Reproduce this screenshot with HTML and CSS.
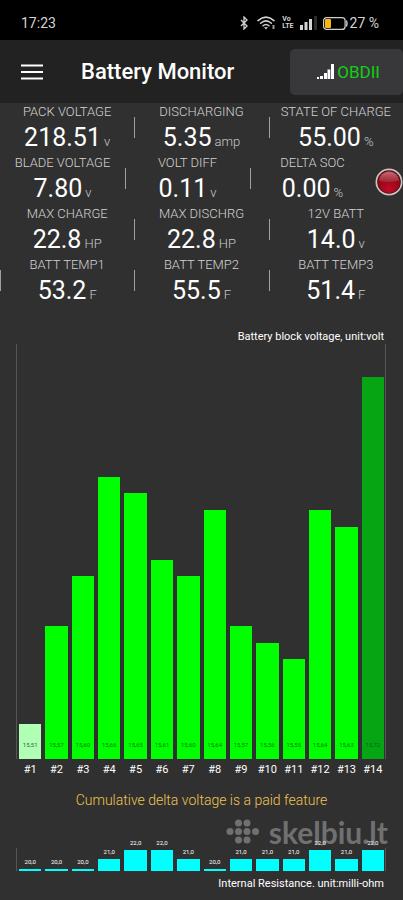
FILE: index.html
```html
<!DOCTYPE html>
<html lang="en">
<head>
<meta charset="utf-8">
<meta name="viewport" content="width=device-width, initial-scale=1">
<title>Battery Monitor</title>
<link rel="stylesheet" href="styles.css">
</head>
<body>
<div class="status">
  <span class="clock">17:23</span>
  <div class="tray">
    <svg class="bluetooth" width="8" height="14" viewBox="0 0 8 14"><path d="M1 4l6 6-3 3V1l3 3-6 6" fill="none" stroke="#d4d4d4" stroke-width="1.3"/></svg>
    <svg class="wifi" width="19" height="14" viewBox="0 0 19 14"><g fill="none" stroke="#d4d4d4" stroke-width="1.5" stroke-linecap="round"><path d="M1 4.6Q9 -2.4 17 4.6"/><path d="M3.6 7.2Q9 2.6 14.4 7.2"/><path d="M6 9.8Q9 7.2 12 9.8"/></g><path d="M7 11.2h4L9 13.4z" fill="#d4d4d4"/><path d="M16.5 9v4" stroke="#999" stroke-width="2"/></svg>
    <span class="volte"><span>Vo</span><span>LTE</span></span>
    <svg class="cell" width="17" height="14" viewBox="0 0 17 14"><g fill="#d4d4d4"><rect y="9" width="3" height="5"/><rect x="4.500" y="6" width="3" height="8"/><rect x="9" y="3" width="3" height="11"/></g><rect x="14" width="3" height="14" fill="#2b2b2b"/></svg>
    <svg class="battery" width="25" height="13" viewBox="0 0 25 13"><rect x=".6" y=".6" width="21.500" height="11.800" rx="3" fill="none" stroke="#cfcfcf" stroke-width="1.200"/><rect x="2" y="2" width="6" height="9" rx="1" fill="#fbb315"/><path d="M23.300 3.500q1.400 3 0 6" fill="none" stroke="#cfcfcf" stroke-width="1.400"/></svg>
    <span class="percent">27 %</span>
  </div>
</div>

<header class="bar">
  <button class="menu" type="button" aria-label="Menu"><svg width="22" height="16" viewBox="0 0 22 16"><path d="M0 1.500h22M0 8h22M0 14.500h22" stroke="#fff" stroke-width="2.200"/></svg></button>
  <h1>Battery Monitor</h1>
  <button class="obd" type="button"><svg width="17" height="16" viewBox="0 0 17 16" fill="#fff"><rect y="13" width="2" height="2"/><rect x="3" y="12" width="3" height="3"/><rect x="7" y="9" width="3" height="6"/><rect x="10.500" y="5.500" width="2.800" height="9.500"/><rect x="14" y="0" width="3" height="15"/></svg><span>OBDII</span></button>
</header>

<main>
  <section class="stats">
    <div class="row">
      <div class="stat"><h2>PACK VOLTAGE</h2><p>218.51<small>v</small></p></div>
      <div class="stat"><h2>DISCHARGING</h2><p>5.35<small>amp</small></p></div>
      <div class="stat"><h2>STATE OF CHARGE</h2><p>55.00<small>%</small></p></div>
    </div>
    <div class="row">
      <div class="stat"><h2>BLADE VOLTAGE</h2><p>7.80<small>v</small></p></div>
      <div class="stat"><h2>VOLT DIFF</h2><p>0.11<small>v</small></p></div>
      <div class="stat"><h2>DELTA SOC</h2><p>0.00<small>%</small></p></div>
      <svg class="led" width="28" height="28" viewBox="0 0 28 28"><defs><radialGradient id="red" cx=".5" cy=".85" r=".8"><stop offset="0" stop-color="#c00a26"/><stop offset="1" stop-color="#800614"/></radialGradient><linearGradient id="shine" x2="0" y2="1"><stop offset="0" stop-color="#d58a92"/><stop offset="1" stop-color="#a52a38"/></linearGradient></defs><circle cx="14" cy="14" r="13.500" fill="#c9c5c2"/><circle cx="14" cy="14" r="11.800" fill="#4c0a10"/><circle cx="14" cy="14" r="11" fill="url(#red)"/><path d="M4 12.500a10 9 0 0 1 20 0q-10 3.500-20 0z" fill="url(#shine)" opacity=".75"/></svg>
    </div>
    <div class="row">
      <div class="stat"><h2>MAX CHARGE</h2><p>22.8<small>HP</small></p></div>
      <div class="stat"><h2>MAX DISCHRG</h2><p>22.8<small>HP</small></p></div>
      <div class="stat"><h2>12V BATT</h2><p>14.0<small>v</small></p></div>
    </div>
    <div class="row lead">
      <div class="stat"><h2>BATT TEMP1</h2><p>53.2<small>F</small></p></div>
      <div class="stat"><h2>BATT TEMP2</h2><p>55.5<small>F</small></p></div>
      <div class="stat"><h2>BATT TEMP3</h2><p>51.4<small>F</small></p></div>
    </div>
  </section>

  <section class="voltage">
    <h2 class="caption">Battery block voltage, unit:volt</h2>
    <div class="plot volts">
      <div class="block low" style="height:8.5%">15,51</div>
      <div class="block" style="height:32%">15,57</div>
      <div class="block" style="height:44%">15,60</div>
      <div class="block" style="height:68%">15,66</div>
      <div class="block" style="height:64%">15,65</div>
      <div class="block" style="height:48%">15,61</div>
      <div class="block" style="height:44%">15,60</div>
      <div class="block" style="height:60%">15,64</div>
      <div class="block" style="height:32%">15,57</div>
      <div class="block" style="height:28%">15,56</div>
      <div class="block" style="height:24%">15,55</div>
      <div class="block" style="height:60%">15,64</div>
      <div class="block" style="height:56%">15,63</div>
      <div class="block high" style="height:92%">15,72</div>
    </div>
    <div class="names"><span>#1</span><span>#2</span><span>#3</span><span>#4</span><span>#5</span><span>#6</span><span>#7</span><span>#8</span><span>#9</span><span>#10</span><span>#11</span><span>#12</span><span>#13</span><span>#14</span></div>
  </section>

  <p class="notice">Cumulative delta voltage is a paid feature</p>

  <section class="resistance">
    <div class="watermark">
      <svg width="34" height="26" viewBox="0 0 34 26" fill="currentColor"><circle cx="12.500" cy="4" r="3.500"/><circle cx="21" cy="4" r="3.500"/><circle cx="4" cy="12.500" r="3.500"/><circle cx="12.500" cy="12.500" r="3.500"/><circle cx="21" cy="12.500" r="3.500"/><circle cx="29.500" cy="12.500" r="3.500"/><circle cx="12.500" cy="21" r="3.500"/><circle cx="21" cy="21" r="3.500"/></svg>
      <span>skelbiu.lt</span>
    </div>
    <div class="plot ohms">
      <div class="ohm"><span>20,0</span><i style="height:10%"></i></div>
      <div class="ohm"><span>20,0</span><i style="height:10%"></i></div>
      <div class="ohm"><span>20,0</span><i style="height:10%"></i></div>
      <div class="ohm"><span>21,0</span><i style="height:51%"></i></div>
      <div class="ohm"><span>22,0</span><i style="height:92%"></i></div>
      <div class="ohm"><span>22,0</span><i style="height:92%"></i></div>
      <div class="ohm"><span>21,0</span><i style="height:51%"></i></div>
      <div class="ohm"><span>20,0</span><i style="height:10%"></i></div>
      <div class="ohm"><span>21,0</span><i style="height:51%"></i></div>
      <div class="ohm"><span>21,0</span><i style="height:51%"></i></div>
      <div class="ohm"><span>21,0</span><i style="height:51%"></i></div>
      <div class="ohm"><span>22,0</span><i style="height:92%"></i></div>
      <div class="ohm"><span>21,0</span><i style="height:51%"></i></div>
      <div class="ohm"><span>22,0</span><i style="height:92%"></i></div>
    </div>
    <h2 class="caption">Internal Resistance. unit:milli-ohm</h2>
  </section>
</main>
</body>
</html>
```
FILE: styles.css
```css
* { box-sizing: border-box; }
body {
  margin: 0;
  min-height: 100vh;
  background: #303030;
  color: #fff;
  font-family: Roboto, "Liberation Sans", sans-serif;
}
h1, h2, p { margin: 0; font-weight: 400; }
button { border: 0; padding: 0; color: inherit; font: inherit; }
svg { display: block; flex: none; }

.status {
  display: flex;
  justify-content: space-between;
  align-items: center;
  height: 40px;
  padding: 6px 24px 0 21px;
  background: #000;
  color: #d4d4d4;
  font-size: 14px;
}
.tray { display: flex; align-items: center; }
.wifi { margin-left: 9px; }
.volte {
  display: flex;
  flex-direction: column;
  margin-left: 6px;
  font-size: 7px;
  line-height: 7px;
  font-weight: 700;
}
.cell { margin-left: 6px; }
.battery { margin-left: 6px; }
.percent { margin-left: 2px; }

.bar {
  display: flex;
  align-items: center;
  height: 63px;
  background: #222;
}
.menu { background: none; padding: 0 20px 0 21px; }
.bar h1 {
  flex: 1;
  padding-left: 18px;
  font-size: 22px;
  font-weight: 500;
}
.obd {
  display: flex;
  align-items: center;
  justify-content: center;
  gap: 3px;
  width: 28%;
  height: 46px;
  padding-left: 4px;
  border-radius: 5px;
  background: #38383a;
  color: #14cf14;
  font-size: 17px;
}

.stats { padding-top: 2px; }
.row { display: flex; align-items: center; height: 51px; }
.stat {
  position: relative;
  flex: 1;
  text-align: center;
}
.stat h2 {
  color: #d2d2d2;
  font-size: 13px;
  font-weight: 300;
  line-height: 18px;
}
.stat p {
  font-size: 25px;
  line-height: 33px;
  white-space: nowrap;
}
.stat small {
  margin-left: 3px;
  color: #c8c8c8;
  font-size: 13px;
  font-weight: 300;
}
.stat + .stat::before, .lead .stat:first-child::before {
  content: "";
  position: absolute;
  left: 0;
  top: 14px;
  width: 1px;
  height: 21px;
  background: #a0a0a0;
}

.voltage { padding: 19px 17px 0 16px; }
.caption {
  font-size: 11px;
  line-height: 14px;
  text-align: right;
}
.voltage .caption { padding: 2px 2px 0; }
.plot {
  display: grid;
  grid-template-columns: repeat(14, 1fr);
  column-gap: 4px;
  align-items: end;
  padding: 0 1px 0 2px;
  border: solid #555;
  border-width: 0 1px;
}
.volts { height: 415px; }
.block {
  display: flex;
  align-items: flex-end;
  justify-content: center;
  padding-bottom: 10px;
  background: #0f0;
  color: #087c08;
  font-size: 6px;
  line-height: 8px;
}
.low { background: #afffb5; color: #356b38; }
.high { background: #05a514; color: #056b0c; }
.names {
  display: grid;
  grid-template-columns: repeat(14, 1fr);
  column-gap: 4px;
  padding: 0 2px 0 3px;
  font-size: 11px;
  line-height: 22px;
}
.names span { display: flex; justify-content: center; }

.notice {
  padding: 9px 0 0;
  color: #f0c650;
  font-size: 14px;
  font-weight: 300;
  line-height: 20px;
  text-align: center;
}
.resistance { position: relative; padding: 38px 17px 0 16px; }
.resistance .caption { padding: 6px 2px 0; }
.ohms { position: relative; height: 23px; }
.ohm {
  display: flex;
  flex-direction: column;
  justify-content: flex-end;
  height: 100%;
  text-align: center;
  font-size: 6px;
  line-height: 8px;
}
.ohm span { margin-bottom: 3px; }
.ohm i { flex: none; background: #0ff; }
.watermark {
  position: absolute;
  right: 15px;
  top: 8px;
  display: flex;
  align-items: center;
  gap: 9px;
  color: #707070;
  font-family: Lato, sans-serif;
  font-size: 30px;
  line-height: 28px;
  font-weight: 700;
}
```
